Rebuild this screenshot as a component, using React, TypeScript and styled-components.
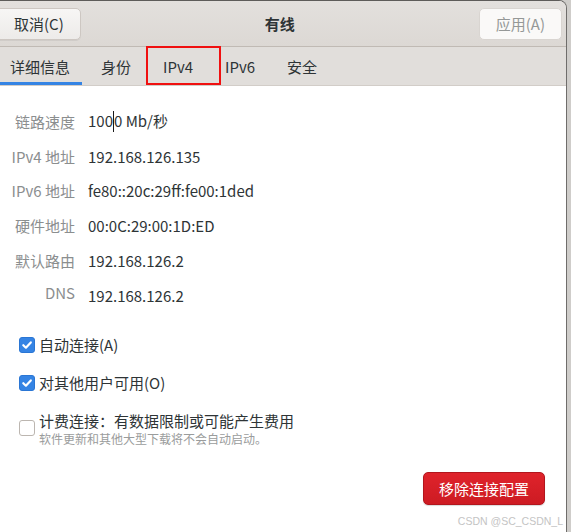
import { FC, Fragment } from 'react'
import styled, { createGlobalStyle } from 'styled-components'

const GlobalStyle = createGlobalStyle`
    html, body {
        margin: 0;
        padding: 0;
        background: #cfcdca;
    }
    body {
        font-family: "Noto Sans CJK SC", "Noto Sans", sans-serif;
        font-size: 15px;
        color: #2e3436;
    }
`

const Window = styled.div`
    position: relative;
    width: 567px;
    height: 532px;
    box-sizing: border-box;
    background: #ffffff;
    border-top: 1px solid #5e5c5a;
    border-right: 1px solid #6f6d6b;
    border-top-right-radius: 8px;
    overflow: hidden;
    display: flex;
    flex-direction: column;
`

const HeaderBar = styled.header`
    height: 45px;
    flex-shrink: 0;
    display: flex;
    align-items: center;
    padding: 0 4px 0 0;
    background: linear-gradient(#e3e0dd, #dcd8d4);
    border-bottom: 1px solid #c0bab4;
`

const HeaderButton = styled.button<{ $disabled?: boolean }>`
    height: 32px;
    box-sizing: border-box;
    padding: 0 16px;
    font-family: inherit;
    font-size: 15px;
    border-radius: 5px;
    border: 1px solid ${p => (p.$disabled ? '#d9d5d1' : '#cdc7c2')};
    background: ${p => (p.$disabled ? '#faf9f8' : 'linear-gradient(#f7f6f5, #edebe9)')};
    color: ${p => (p.$disabled ? '#959897' : '#2e3436')};
    box-shadow: ${p => (p.$disabled ? 'none' : '0 1px 0 rgba(0,0,0,0.06)')};
`

const CancelButton = styled(HeaderButton)`
    margin-left: -6px;
    padding: 0 16px 0 19px;
`

const Title = styled.div`
    flex: 1;
    text-align: center;
    font-weight: bold;
    font-size: 15px;
    color: #2e3436;
`

const TabBar = styled.nav`
    position: relative;
    height: 38px;
    flex-shrink: 0;
    display: flex;
    background: #e1dedb;
    border-bottom: 1px solid #d2cdc8;
`

const Tab = styled.div<{ $active?: boolean; $pad: string }>`
    display: flex;
    align-items: center;
    box-sizing: border-box;
    height: 100%;
    padding: ${p => p.$pad};
    padding-top: 3px;
    color: #2e3436;
    font-size: 15px;
    border-bottom: 3px solid ${p => (p.$active ? '#3584e4' : 'transparent')};
`

const Highlight = styled.div`
    position: absolute;
    left: 146px;
    top: -1px;
    width: 75px;
    height: 39px;
    box-sizing: border-box;
    border: 2px solid #f01010;
    pointer-events: none;
`

const Content = styled.main`
    flex: 1;
    display: flex;
    flex-direction: column;
    padding-top: 18px;
`

const InfoGrid = styled.div`
    display: grid;
    grid-template-columns: 75px auto;
    grid-auto-rows: 34.8px;
    column-gap: 13px;
    align-items: center;
`

const Label = styled.span<{ $raise?: boolean }>`
    text-align: right;
    color: #8b8e8f;
    position: relative;
    top: ${p => (p.$raise ? '-3px' : '0')};
`

const Value = styled.span`
    color: #2e3436;
`

const Caret = styled.span`
    display: inline-block;
    width: 0;
    height: 21px;
    border-left: 1px solid #1a1a1a;
    vertical-align: -5px;
`

const Options = styled.div`
    display: flex;
    flex-direction: column;
    gap: 16px;
    margin-top: 21px;
    padding-left: 19px;
`

const OptionRow = styled.label`
    display: flex;
    align-items: center;
    gap: 4px;
`

const Box = styled.span<{ $checked?: boolean }>`
    width: 16px;
    height: 16px;
    flex-shrink: 0;
    box-sizing: border-box;
    border-radius: 3px;
    display: flex;
    align-items: center;
    justify-content: center;
    background: ${p => (p.$checked ? '#3584e4' : '#ffffff')};
    border: 1px solid ${p => (p.$checked ? '#2a76d4' : '#bcb6b0')};
`

const OptionText = styled.div`
    display: flex;
    flex-direction: column;
    line-height: 22px;
`

const OptionHint = styled.span`
    font-size: 12px;
    line-height: 16px;
    color: #9a9c9c;
    margin-top: -1px;
`

const Footer = styled.div`
    display: flex;
    justify-content: flex-end;
    padding: 25px 21px 0 0;
`

const DangerButton = styled.button`
    height: 33px;
    padding: 0 15px;
    font-family: inherit;
    font-size: 15px;
    color: #ffffff;
    border-radius: 5px;
    border: 1px solid #b2161d;
    background: linear-gradient(#df232b, #cd1b23);
    box-shadow: 0 1px 1px rgba(0, 0, 0, 0.15);
`

const Watermark = styled.span`
    position: absolute;
    right: 3px;
    bottom: 5px;
    font-family: "Liberation Sans", Arial, sans-serif;
    font-size: 10.5px;
    color: #c4c4c4;
`

const CheckMark: FC = () => (
    <svg width="12" height="12" viewBox="0 0 12 12">
        <path d="M2.3 6.2 L4.9 8.7 L9.8 3.4" fill="none" stroke="#fff" strokeWidth="2.2" strokeLinecap="round" strokeLinejoin="round" />
    </svg>
)

const tabs = [
    { name: '详细信息', pad: '0 12px 0 10px' },
    { name: '身份', pad: '0 16px 0 19px' },
    { name: 'IPv4', pad: '0 16px' },
    { name: 'IPv6', pad: '0 16px' },
    { name: '安全', pad: '0 16px' },
]

const details = [
    { label: 'IPv4 地址', value: '192.168.126.135' },
    { label: 'IPv6 地址', value: 'fe80::20c:29ff:fe00:1ded' },
    { label: '硬件地址', value: '00:0C:29:00:1D:ED' },
    { label: '默认路由', value: '192.168.126.2' },
]

const App = () => {
    return (
        <>
            <GlobalStyle />
            <Window>
                <HeaderBar>
                    <CancelButton>取消(C)</CancelButton>
                    <Title>有线</Title>
                    <HeaderButton $disabled>应用(A)</HeaderButton>
                </HeaderBar>
                <TabBar>
                    {tabs.map((t, i) => (
                        <Tab key={t.name} $active={i === 0} $pad={t.pad}>{t.name}</Tab>
                    ))}
                    <Highlight />
                </TabBar>
                <Content>
                    <InfoGrid>
                        <Label>链路速度</Label>
                        <Value>100<Caret />0 Mb/秒</Value>
                        {details.map(d => (
                            <Fragment key={d.label}>
                                <Label>{d.label}</Label>
                                <Value>{d.value}</Value>
                            </Fragment>
                        ))}
                        <Label $raise>DNS</Label>
                        <Value>192.168.126.2</Value>
                    </InfoGrid>
                    <Options>
                        <OptionRow>
                            <Box $checked><CheckMark /></Box>
                            <OptionText>自动连接(A)</OptionText>
                        </OptionRow>
                        <OptionRow>
                            <Box $checked><CheckMark /></Box>
                            <OptionText>对其他用户可用(O)</OptionText>
                        </OptionRow>
                        <OptionRow>
                            <Box />
                            <OptionText>
                                计费连接：有数据限制或可能产生费用
                                <OptionHint>软件更新和其他大型下载将不会自动启动。</OptionHint>
                            </OptionText>
                        </OptionRow>
                    </Options>
                    <Footer>
                        <DangerButton>移除连接配置</DangerButton>
                    </Footer>
                </Content>
                <Watermark>CSDN @SC_CSDN_L</Watermark>
            </Window>
        </>
    )
}

export default App
